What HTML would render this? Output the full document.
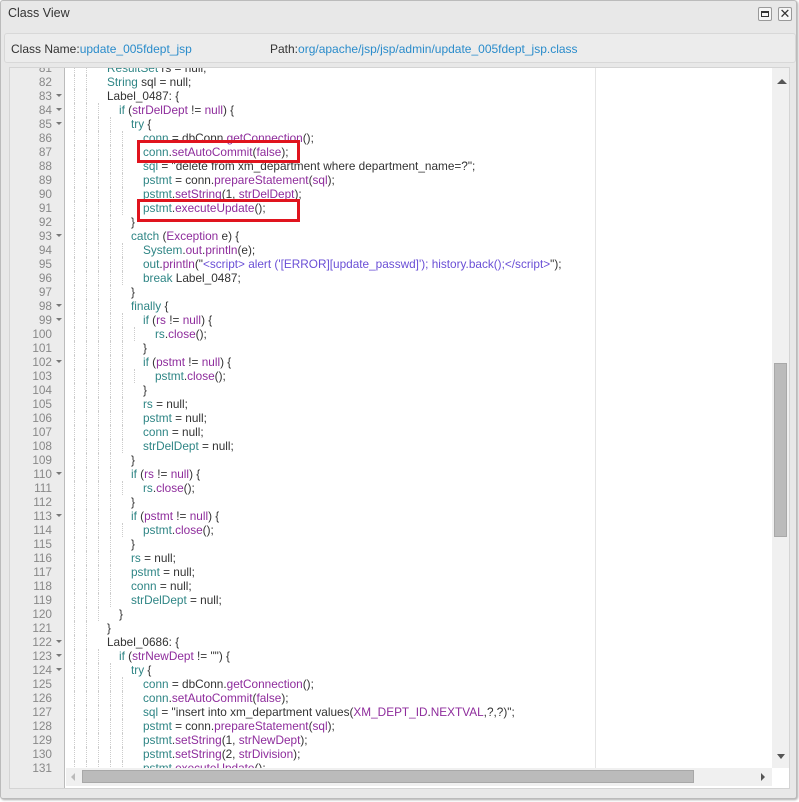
<!DOCTYPE html>
<html><head><meta charset="utf-8"><style>
*{margin:0;padding:0;box-sizing:border-box}
body{width:799px;height:802px;background:#fff;font-family:"Liberation Sans",sans-serif;position:relative;overflow:hidden}
.win{position:absolute;left:0;top:0;width:797px;height:799px;background:#e8e8e8;border:1px solid #bbb;border-radius:3px;box-shadow:1px 1px 2px #aaa}
.title{position:absolute;left:7px;top:5px;font-size:12.5px;color:#333}
.btn{position:absolute;top:6px;width:14px;height:14px;border:1px solid #999;border-radius:2px;background:#f6f6f6}
.info{position:absolute;left:3px;top:32px;width:792px;height:30px;background:#ececec;border:1px solid #d8d8d8;border-radius:3px;font-size:12px;color:#333}
.info span{color:#2a8ccb}
.box{position:absolute;left:8px;top:66px;width:781px;height:722px;background:#fff;border:1px solid #d4d4d4;overflow:hidden}
.gut{position:absolute;left:0;top:0;width:55px;height:100%;background:#ececec;border-right:1px solid #bbb}
.code{position:absolute;left:0;top:-7px;width:770px}
.l{position:relative;height:14px;line-height:14px;font-size:11.8px;white-space:pre;color:#333}
.n{position:absolute;left:0;width:42px;text-align:right;color:#888}
.f{position:absolute;left:46px;top:5px;width:0;height:0;border-left:3px solid transparent;border-right:3px solid transparent;border-top:3px solid #777}
.g{position:absolute;top:0;height:14px;border-left:1px dotted #ccc}
.t{color:#2e8585}.p{color:#8e2c9c}.s{color:#6a4fd6}
.vs{position:absolute;left:762px;top:0;width:18px;height:700px;background:#f0f0f0}
.hs{position:absolute;left:56px;top:700px;width:706px;height:18px;background:#f0f0f0}
.red{position:absolute;border:3px solid #e0141e}
</style></head><body>
<div class="win">
<div class="title">Class View</div>
<div class="btn" style="left:757px"><div style="position:absolute;left:2px;top:3px;width:8px;height:6px;border:1px solid #333;border-top-width:2px"></div></div>
<div class="btn" style="left:777px;font-size:13px;line-height:12px;text-align:center;color:#333">✕</div>
<div class="info"><div style="position:absolute;left:6px;top:8px">Class Name:<span>update_005fdept_jsp</span></div><div style="position:absolute;left:265px;top:8px">Path:<span>org/apache/jsp/jsp/admin/update_005fdept_jsp.class</span></div></div>
<div class="box">
<div class="gut"></div>
<div style="position:absolute;left:585px;top:0;height:700px;border-left:1px solid #e4e4e4"></div>
<div class="code" id="c"></div>
<div class="vs"><div style="position:absolute;left:5px;top:11px;border-left:5px solid transparent;border-right:5px solid transparent;border-bottom:5px solid #555;width:0"></div><div style="position:absolute;left:2px;top:295px;width:13px;height:174px;background:#bbb;border:1px solid #a8a8a8"></div><div style="position:absolute;left:5px;top:686px;border-left:4px solid transparent;border-right:4px solid transparent;border-top:5px solid #555;width:0"></div></div>
<div class="hs"><div style="position:absolute;left:5px;top:5px;border-top:4px solid transparent;border-bottom:4px solid transparent;border-right:4px solid #bbb;height:0"></div><div style="position:absolute;left:16px;top:2px;width:612px;height:13px;background:#bbb;border:1px solid #a8a8a8"></div><div style="position:absolute;left:695px;top:5px;border-top:4px solid transparent;border-bottom:4px solid transparent;border-left:4px solid #555;height:0"></div></div>
<div class="red" style="left:127px;top:72px;width:163px;height:23px"></div>
<div class="red" style="left:127px;top:131px;width:163px;height:23px"></div>
</div>
</div>
<script>
var L=[
[81,2,'<span class="t">ResultSet</span> rs = null;'],
[82,2,'<span class="t">String</span> sql = null;'],
[83,2,'Label_0487: {',1],
[84,3,'<span class="t">if</span> (<span class="p">strDelDept</span> != <span class="p">null</span>) {',1],
[85,4,'<span class="t">try</span> {',1],
[86,5,'<span class="t">conn</span> = dbConn.<span class="p">getConnection</span>();'],
[87,5,'<span class="t">conn</span>.<span class="p">setAutoCommit</span>(<span class="p">false</span>);'],
[88,5,'<span class="t">sql</span> = "delete from xm_department where department_name=?";'],
[89,5,'<span class="t">pstmt</span> = conn.<span class="p">prepareStatement</span>(<span class="p">sql</span>);'],
[90,5,'<span class="t">pstmt</span>.<span class="p">setString</span>(1, <span class="p">strDelDept</span>);'],
[91,5,'<span class="t">pstmt</span>.<span class="p">executeUpdate</span>();'],
[92,4,'}'],
[93,4,'<span class="t">catch</span> (<span class="p">Exception</span> e) {',1],
[94,5,'<span class="t">System</span>.<span class="p">out</span>.<span class="p">println</span>(e);'],
[95,5,'<span class="t">out</span>.<span class="p">println</span>("<span class="s">&lt;script&gt; alert (\'[ERROR][update_passwd]\'); history.back();&lt;/script&gt;</span>");'],
[96,5,'<span class="t">break</span> Label_0487;'],
[97,4,'}'],
[98,4,'<span class="t">finally</span> {',1],
[99,5,'<span class="t">if</span> (<span class="p">rs</span> != <span class="p">null</span>) {',1],
[100,6,'<span class="t">rs</span>.<span class="p">close</span>();'],
[101,5,'}'],
[102,5,'<span class="t">if</span> (<span class="p">pstmt</span> != <span class="p">null</span>) {',1],
[103,6,'<span class="t">pstmt</span>.<span class="p">close</span>();'],
[104,5,'}'],
[105,5,'<span class="t">rs</span> = null;'],
[106,5,'<span class="t">pstmt</span> = null;'],
[107,5,'<span class="t">conn</span> = null;'],
[108,5,'<span class="t">strDelDept</span> = null;'],
[109,4,'}'],
[110,4,'<span class="t">if</span> (<span class="p">rs</span> != <span class="p">null</span>) {',1],
[111,5,'<span class="t">rs</span>.<span class="p">close</span>();'],
[112,4,'}'],
[113,4,'<span class="t">if</span> (<span class="p">pstmt</span> != <span class="p">null</span>) {',1],
[114,5,'<span class="t">pstmt</span>.<span class="p">close</span>();'],
[115,4,'}'],
[116,4,'<span class="t">rs</span> = null;'],
[117,4,'<span class="t">pstmt</span> = null;'],
[118,4,'<span class="t">conn</span> = null;'],
[119,4,'<span class="t">strDelDept</span> = null;'],
[120,3,'}'],
[121,2,'}'],
[122,2,'Label_0686: {',1],
[123,3,'<span class="t">if</span> (<span class="p">strNewDept</span> != "") {',1],
[124,4,'<span class="t">try</span> {',1],
[125,5,'<span class="t">conn</span> = dbConn.<span class="p">getConnection</span>();'],
[126,5,'<span class="t">conn</span>.<span class="p">setAutoCommit</span>(<span class="p">false</span>);'],
[127,5,'<span class="t">sql</span> = "insert into xm_department values(<span class="p">XM_DEPT_ID</span>.<span class="p">NEXTVAL</span>,?,?)";'],
[128,5,'<span class="t">pstmt</span> = conn.<span class="p">prepareStatement</span>(<span class="p">sql</span>);'],
[129,5,'<span class="t">pstmt</span>.<span class="p">setString</span>(1, <span class="p">strNewDept</span>);'],
[130,5,'<span class="t">pstmt</span>.<span class="p">setString</span>(2, <span class="p">strDivision</span>);'],
[131,5,'<span class="t">pstmt</span>.<span class="p">executeUpdate</span>();']
];
var h='';
L.forEach(function(r){
 var g='';for(var i=0;i<r[1];i++)g+='<div class="g" style="left:'+(64+12*i)+'px"></div>';
 h+='<div class="l"><span class="n">'+r[0]+'</span>'+(r[3]?'<span class="f"></span>':'')+g+'<span style="position:absolute;left:'+(73+12*r[1])+'px">'+r[2]+'</span></div>';
});
document.getElementById('c').innerHTML=h;
</script>
</body></html>
